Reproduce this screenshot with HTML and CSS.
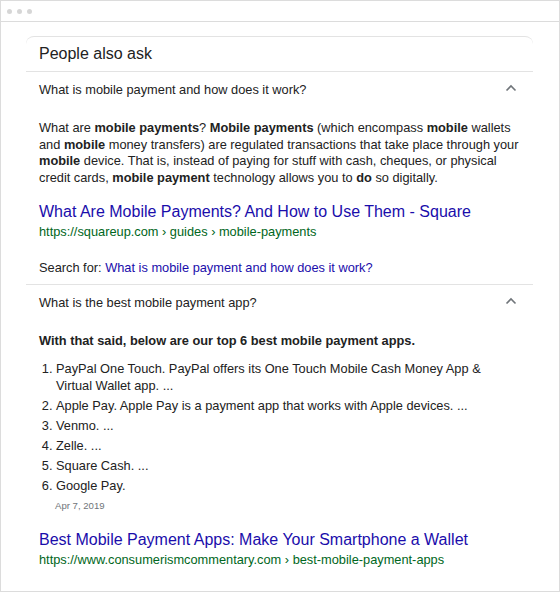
FILE: index.html
```html
<!DOCTYPE html>
<html lang="en">
<head>
<meta charset="utf-8">
<title>People also ask</title>
<link rel="stylesheet" href="styles.css">
</head>
<body>
<div class="window">
  <div class="titlebar">
    <span class="dot"></span><span class="dot"></span><span class="dot"></span>
  </div>
  <div class="card">
    <div class="card-head">People also ask</div>

    <div class="question">
      <span>What is mobile payment and how does it work?</span>
      <svg class="chevron" width="12" height="8" viewBox="0 0 12 8"><path d="M1.5 6.5 L6 2 L10.5 6.5" fill="none" stroke="#70757a" stroke-width="1.6"/></svg>
    </div>
    <div class="answer">
      <p class="snippet">What are <b>mobile payments</b>? <b>Mobile payments</b> (which encompass <b>mobile</b> wallets and <b>mobile</b> money transfers) are regulated transactions that take place through your <b>mobile</b> device. That is, instead of paying for stuff with cash, cheques, or physical credit cards, <b>mobile payment</b> technology allows you to <b>do</b> so digitally.</p>
      <a class="result-title" href="#">What Are Mobile Payments? And How to Use Them - Square</a>
      <div class="result-url">https://squareup.com › guides › mobile-payments</div>
      <p class="search-for">Search for: <a href="#">What is mobile payment and how does it work?</a></p>
    </div>

    <div class="question">
      <span>What is the best mobile payment app?</span>
      <svg class="chevron" width="12" height="8" viewBox="0 0 12 8"><path d="M1.5 6.5 L6 2 L10.5 6.5" fill="none" stroke="#70757a" stroke-width="1.6"/></svg>
    </div>
    <div class="answer last">
      <p class="list-head">With that said, below are our top 6 best mobile payment apps.</p>
      <ol class="list">
        <li>PayPal One Touch. PayPal offers its One Touch Mobile Cash Money App &amp; Virtual Wallet app. ...</li>
        <li>Apple Pay. Apple Pay is a payment app that works with Apple devices. ...</li>
        <li>Venmo. ...</li>
        <li>Zelle. ...</li>
        <li>Square Cash. ...</li>
        <li>Google Pay.</li>
      </ol>
      <div class="date">Apr 7, 2019</div>
      <a class="result-title second" href="#">Best Mobile Payment Apps: Make Your Smartphone a Wallet</a>
      <div class="result-url">https://www.consumerismcommentary.com › best-mobile-payment-apps</div>
    </div>
  </div>
</div>
</body>
</html>
```
FILE: styles.css
```css
* { box-sizing: border-box; }
html, body { margin: 0; padding: 0; background: #fff; }
body {
  font-family: "Liberation Sans", Arial, sans-serif;
  color: #222;
  width: 560px;
  height: 592px;
  overflow: hidden;
}
.window {
  width: 560px;
  height: 592px;
  border: 1px solid #dcdcdc;
  overflow: hidden;
}
.titlebar {
  height: 21px;
  border-bottom: 1px solid #dcdcdc;
  display: flex;
  align-items: center;
  gap: 5px;
  padding-left: 6px;
}
.dot {
  width: 5px;
  height: 5px;
  border-radius: 50%;
  background: #d6d6d6;
}
.card {
  margin: 14px 0 0 25px;
  width: 507px;
  border-top: 1px solid #e3e3e3;
  border-radius: 8px 8px 0 0;
}
.card-head {
  height: 35px;
  display: flex;
  align-items: center;
  padding: 0 13px;
  font-size: 16px;
  border-bottom: 1px solid #e3e3e3;
}
.question {
  height: 35px;
  display: flex;
  align-items: center;
  justify-content: space-between;
  padding: 0 16px 0 13px;
  font-size: 12.8px;
}
.chevron { display: block; margin-top: -3px; }
.answer {
  padding: 13px 13px 7px;
  font-size: 12.8px;
  line-height: 16.7px;
  border-bottom: 1px solid #e3e3e3;
}
.answer.last { border-bottom: none; }
.answer p { margin: 0; }
.snippet b, .list-head { font-weight: bold; }
.result-title {
  display: block;
  margin-top: 15px;
  font-size: 16px;
  line-height: 20px;
  color: #1a0dab;
  text-decoration: none;
}
.result-title.second { margin-top: 18px; }
.result-url {
  font-size: 12.8px;
  line-height: 20px;
  color: #006621;
}
.answer .search-for { margin-top: 18px; }
.search-for a { color: #1a0dab; text-decoration: none; }
.list {
  margin: 12px 0 0;
  padding-left: 17px;
}
.list li { margin-top: 3.35px; }
.list li:first-child { margin-top: 0; }
.date {
  margin-top: 4px;
  padding-left: 16px;
  font-size: 9.6px;
  line-height: 13px;
  color: #70757a;
}
```
